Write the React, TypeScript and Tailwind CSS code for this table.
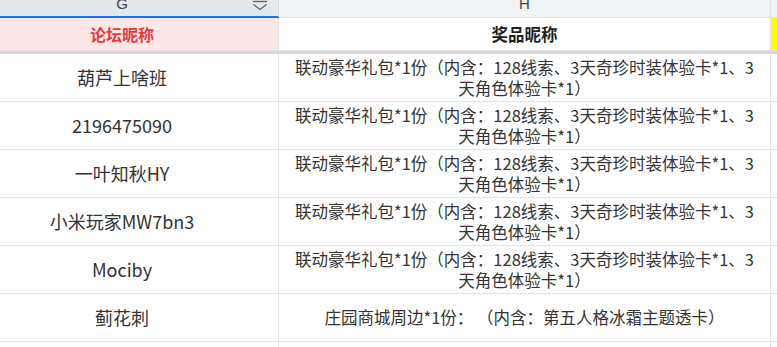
const rows = [
  { name: "葫芦上啥班", prize: "gift" },
  { name: "2196475090", prize: "gift" },
  { name: "一叶知秋HY", prize: "gift" },
  { name: "小米玩家MW7bn3", prize: "gift" },
  { name: "Mociby", prize: "gift" },
  { name: "蓟花刺", prize: "card" },
  { name: "", prize: "" },
];

const font = { fontFamily: '"Noto Sans CJK SC", "Noto Sans", sans-serif' };

// column header dropdown glyph (line + chevron)
function FilterIcon() {
  return (
    <svg width="16" height="11" viewBox="0 0 16 11" fill="none" stroke="#5f6368" strokeWidth="1.3">
      <path d="M1 1.5h14" />
      <path d="M1.5 4.5l6.5 5 6.5-5" />
    </svg>
  );
}

function Prize({ kind }: { kind: string }) {
  if (kind === "gift")
    return (
      <div className="flex flex-col items-center leading-[21px]">
        <span className="whitespace-nowrap">联动豪华礼包*1份（内含：128线索、3天奇珍时装体验卡*1、3</span>
        <span className="whitespace-nowrap">天角色体验卡*1）</span>
      </div>
    );
  if (kind === "card")
    return <span className="whitespace-nowrap">庄园商城周边*1份： （内含：第五人格冰霜主题透卡）</span>;
  return null;
}

export default function App() {
  return (
    <div className="w-[777px] h-[347px] overflow-hidden bg-white" style={font}>
      <div className="flex flex-col -ml-[34px] w-[900px]">
        {/* column letters */}
        <div className="flex h-[18px]">
          <div className="relative w-[313px] h-full bg-[#e6e7ea] border-b-2 border-[#1a73e8] border-r border-r-[#d6d8db] flex justify-center overflow-hidden">
            <span className="font-['Liberation_Sans'] text-[15px] leading-[15px] -mt-[4px] text-[#444]">G</span>
            <div className="absolute right-[10px] top-0">
              <FilterIcon />
            </div>
          </div>
          <div className="w-[492px] h-full bg-[#f1f2f4] border-b border-[#dfe1e4] border-r border-r-[#dfe1e4] flex justify-center overflow-hidden">
            <span className="font-['Liberation_Sans'] text-[15px] leading-[15px] -mt-[4px] text-[#444]">H</span>
          </div>
          <div className="flex-1 h-full bg-[#f1f2f4] border-b border-[#dfe1e4]" />
        </div>

        {/* header row */}
        <div className="flex h-[32px]">
          <div className="w-[313px] h-full bg-[#fde6e6] border-r border-[#e2e3e5] flex items-center justify-center text-[16px] font-bold text-[#e23b3b]">
            论坛昵称
          </div>
          <div className="w-[492px] h-full bg-white border-r border-[#e2e3e5] flex items-center justify-center text-[16.5px] font-bold text-[#1f1f1f]">
            奖品昵称
          </div>
          <div className="flex-1 h-full bg-[#ffff00]" />
        </div>

        {/* frozen rows divider */}
        <div className="h-[4px] bg-[#d9d9d9] border-t border-[#e4e4e4]" />

        {rows.map((r, i) => (
          <div key={i} className="flex h-[48px] border-b border-[#e2e3e5] text-[#333]">
            <div className="w-[313px] h-full border-r border-[#e2e3e5] flex items-center justify-center text-[18px]">
              {r.name}
            </div>
            <div className="w-[492px] h-full border-r border-[#e2e3e5] flex items-center justify-center text-[16.5px]">
              <Prize kind={r.prize} />
            </div>
            <div className="flex-1 h-full" />
          </div>
        ))}
      </div>
    </div>
  );
}
